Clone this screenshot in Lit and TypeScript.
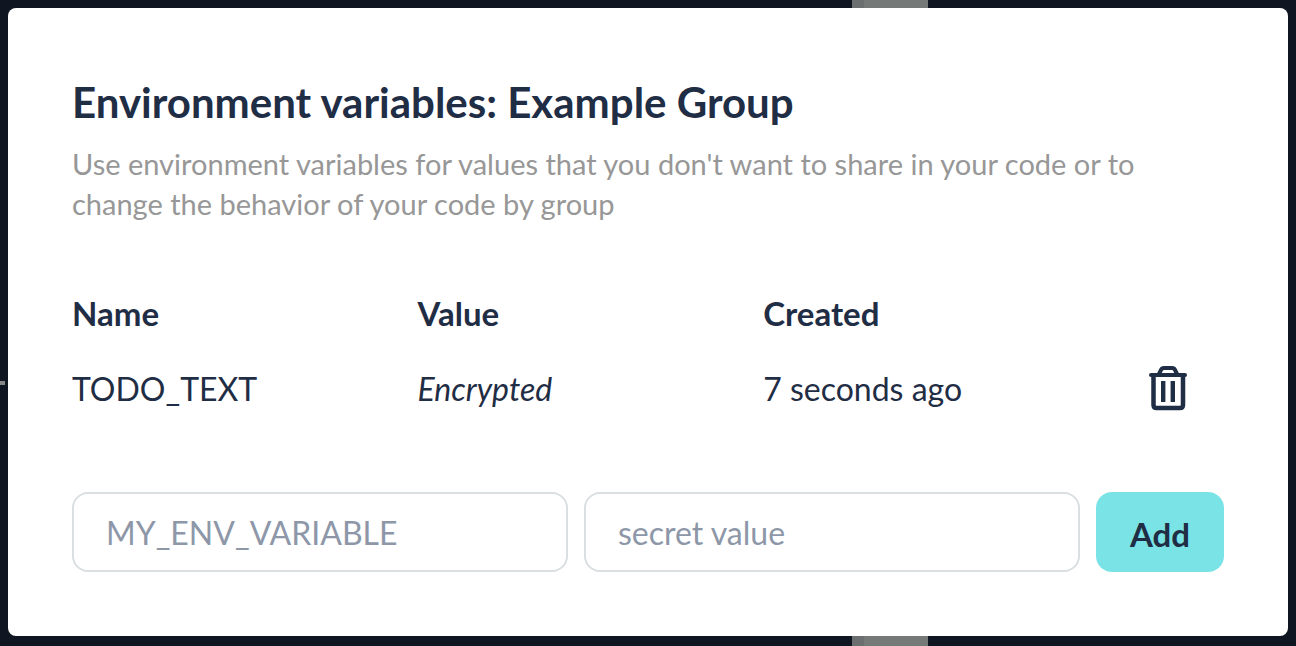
import { LitElement, html, css } from "lit";
import { customElement, state } from "lit/decorators.js";

interface EnvVariable {
  name: string;
  created: string;
}

@customElement("app-root")
export class AppRoot extends LitElement {
  static styles = css`
    :host {
      display: block;
      position: relative;
      box-sizing: border-box;
      min-height: 100vh;
      padding: 8px;
      overflow: hidden;
      background: #101621;
      color: #1f2d45;
      font-family: Lato, "Open Sans", sans-serif;
      font-size: 32px;
      line-height: 40px;
    }
    * {
      box-sizing: border-box;
    }
    .panel-behind {
      position: absolute;
      top: 0;
      bottom: 0;
      left: 852px;
      width: 76px;
      background: #757978;
      border-left: 12px solid #6b6f70;
    }
    .text-behind {
      position: absolute;
      top: 381px;
      left: 0;
      width: 5px;
      height: 4px;
      background: #858789;
    }
    .dialog {
      position: relative;
      padding: 64px;
      background: #fff;
      border-radius: 8px;
    }
    h1 {
      margin: 0;
      padding: 6px 0;
      font-size: 42px;
      line-height: 48px;
      font-weight: 700;
    }
    .description {
      margin: 12px 0 0;
      color: #979797;
      font-size: 29px;
      line-height: 40px;
    }
    table {
      width: 100%;
      margin-top: 48px;
      table-layout: fixed;
      border-collapse: collapse;
      text-align: left;
    }
    th,
    td {
      width: 30%;
      height: 80px;
      padding: 0 0 6px;
      font-weight: 400;
    }
    th {
      height: 72px;
      padding: 2px 0 0;
      font-size: 33px;
      font-weight: 700;
    }
    .action {
      width: 10%;
      padding: 0 0 0 4px;
      text-align: center;
    }
    .delete {
      display: inline-flex;
      padding: 0;
      border: 0;
      background: none;
      color: inherit;
      cursor: pointer;
    }
    .delete svg {
      display: block;
      width: 40px;
      height: 48px;
    }
    form {
      display: grid;
      grid-template-columns: 1fr 1fr 128px;
      gap: 16px;
      margin-top: 60px;
    }
    input,
    .add {
      min-width: 0;
      height: 80px;
      border-radius: 16px;
      font: inherit;
      color: inherit;
    }
    input {
      width: 100%;
      padding: 0 32px;
      border: 2px solid #dadfe1;
      background: #fff;
    }
    input::placeholder {
      color: #8d97a8;
      opacity: 1;
    }
    .add {
      padding: 4px 0 0;
      border: 0;
      background: #79e3e5;
      font-size: 33px;
      font-weight: 700;
      cursor: pointer;
    }
  `;

  @state() private variables: EnvVariable[] = [
    { name: "TODO_TEXT", created: "7 seconds ago" },
  ];

  private remove(name: string) {
    this.variables = this.variables.filter((v) => v.name !== name);
  }

  private add(event: Event) {
    event.preventDefault();
    const form = event.target as HTMLFormElement;
    const name = String(new FormData(form).get("name") ?? "").trim();
    if (!name) return;
    this.variables = [...this.variables, { name, created: "just now" }];
    form.reset();
  }

  render() {
    return html`
      <div class="panel-behind"></div>
      <div class="text-behind"></div>
      <section class="dialog" role="dialog" aria-labelledby="title">
        <h1 id="title">Environment variables: Example Group</h1>
        <p class="description">
          Use environment variables for values that you don't want to share in
          your code or to change the behavior of your code by group
        </p>
        <table>
          <thead>
            <tr>
              <th scope="col">Name</th>
              <th scope="col">Value</th>
              <th scope="col">Created</th>
              <td class="action"></td>
            </tr>
          </thead>
          <tbody>
            ${this.variables.map(
              (v) => html`
                <tr>
                  <td>${v.name}</td>
                  <td><em>Encrypted</em></td>
                  <td>${v.created}</td>
                  <td class="action">
                    <button
                      class="delete"
                      type="button"
                      aria-label="Delete"
                      @click=${() => this.remove(v.name)}
                    >
                      <svg
                        viewBox="0 0 40 48"
                        fill="none"
                        stroke="currentColor"
                        stroke-width="4"
                        aria-hidden="true"
                      >
                        <path d="M3 11H37" stroke-linecap="round" />
                        <path d="M11 10L13 6Q13.8 4 16 4H24Q26.2 4 27 6L29 10" />
                        <path
                          d="M5.5 12V41Q5.5 44 8.5 44H32Q35 44 35 41V12"
                          stroke-width="4.5"
                          stroke-linejoin="round"
                        />
                        <path d="M15.2 17V38M24.8 17V38" stroke-width="4.4" />
                      </svg>
                    </button>
                  </td>
                </tr>
              `
            )}
          </tbody>
        </table>
        <form @submit=${this.add}>
          <input
            name="name"
            type="text"
            aria-label="Variable name"
            placeholder="MY_ENV_VARIABLE"
          />
          <input
            name="value"
            type="text"
            aria-label="Variable value"
            placeholder="secret value"
          />
          <button class="add" type="submit">Add</button>
        </form>
      </section>
    `;
  }
}
